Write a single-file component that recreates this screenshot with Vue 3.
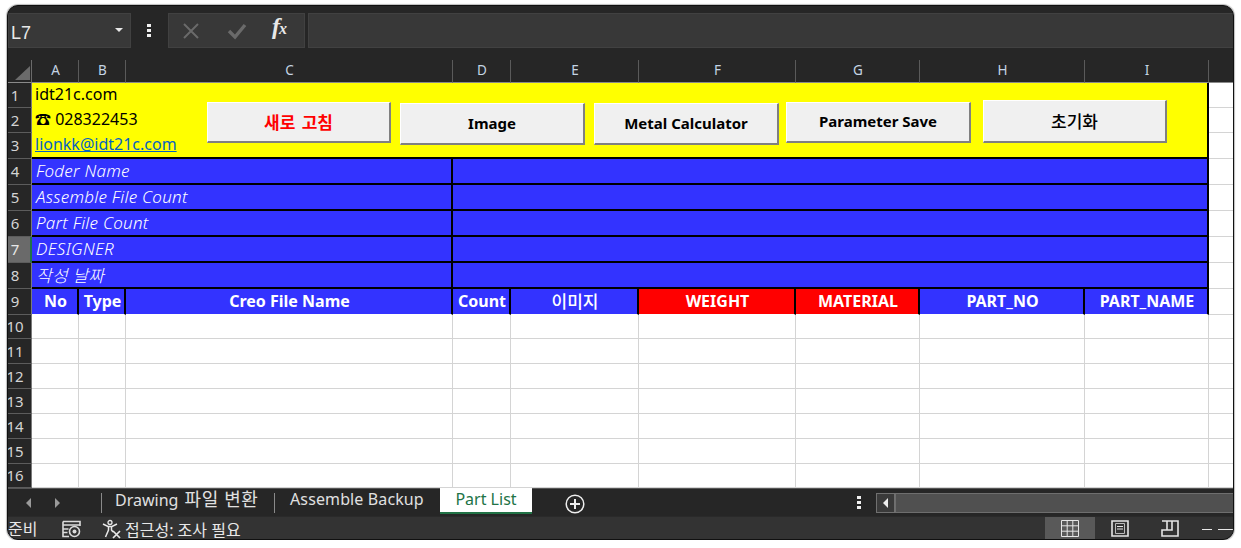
<script setup>
const columns = ['A', 'B', 'C', 'D', 'E', 'F', 'G', 'H', 'I']
const infoRows = [
  { n: 4, label: 'Foder Name' },
  { n: 5, label: 'Assemble File Count' },
  { n: 6, label: 'Part File Count' },
  { n: 7, label: 'DESIGNER', active: true },
  { n: 8, label: '작성 날짜' },
]
const headers = [
  { t: 'No' }, { t: 'Type' }, { t: 'Creo File Name' }, { t: 'Count' }, { t: '이미지', kr: true },
  { t: 'WEIGHT', red: true }, { t: 'MATERIAL', red: true }, { t: 'PART_NO' }, { t: 'PART_NAME' },
]
const emptyRows = [10, 11, 12, 13, 14, 15, 16]
const buttons = [
  { t: '새로 고침', cls: 'b1 red kr' },
  { t: 'Image', cls: 'b2' },
  { t: 'Metal Calculator', cls: 'b3' },
  { t: 'Parameter Save', cls: 'b4' },
  { t: '초기화', cls: 'b5 plain kr' },
]
</script>

<template>
  <div class="window">
    <div class="formula">
      <div class="namebox"><span>L7</span><i class="caret"></i></div>
      <div class="vdots"><b></b><b></b><b></b></div>
      <div class="fbtns">
        <svg width="18" height="18" viewBox="0 0 18 18"><path d="M2 2L16 16M16 2L2 16" stroke="#6a6a6a" stroke-width="2" fill="none"/></svg>
        <svg width="20" height="18" viewBox="0 0 20 18"><path d="M2 9L8 15L18 3" stroke="#6a6a6a" stroke-width="3.4" fill="none"/></svg>
        <span class="fx">f<span class="fxx">x</span></span>
      </div>
      <div class="finput"></div>
    </div>

    <div class="sheet">
      <div class="corner"><svg width="16" height="16" viewBox="0 0 16 16"><path d="M16 1V15H1Z" fill="#6b6b6b"/></svg></div>
      <div v-for="c in columns" :key="c" class="colh">{{ c }}</div>
      <div class="colh tailh"></div>

      <div class="rowh">1</div>
      <div class="yellow">
        <div class="contact">
          <div>idt21c.com</div>
          <div>☎ 028322453</div>
          <div class="mail">lionkk@idt21c.com</div>
        </div>
        <button v-for="b in buttons" :key="b.t" class="xbtn" :class="b.cls">{{ b.t }}</button>
      </div>
      <div class="tail"></div>
      <div class="rowh">2</div>
      <div class="tail"></div>
      <div class="rowh">3</div>
      <div class="tail"></div>

      <template v-for="r in infoRows" :key="r.n">
        <div class="rowh" :class="{ on: r.active }">{{ r.n }}</div>
        <div class="label"><span>{{ r.label }}</span></div>
        <div class="value"></div>
        <div class="tail"></div>
      </template>

      <div class="rowh">9</div>
      <div v-for="h in headers" :key="h.t" class="head" :class="{ redh: h.red, krh: h.kr }"><span>{{ h.t }}</span></div>
      <div class="tail"></div>

      <template v-for="r in emptyRows" :key="r">
        <div class="rowh">{{ r }}</div>
        <div v-for="c in columns" :key="c" class="cell"></div>
        <div class="tail"></div>
      </template>
    </div>

    <div class="tabs">
      <i class="tri left"></i>
      <i class="tri right"></i>
      <span class="sep s1"></span>
      <span class="tab t1">Drawing <span class="tabkr">파일 변환</span></span>
      <span class="sep s2"></span>
      <span class="tab t2">Assemble Backup</span>
      <span class="tab active">Part List</span>
      <svg class="plus" width="20" height="20" viewBox="0 0 20 20"><circle cx="10" cy="10" r="8.8" stroke="#eee" stroke-width="1.5" fill="none"/><path d="M10 5V15M5 10H15" stroke="#eee" stroke-width="2"/></svg>
      <div class="vdots tabdots"><b></b><b></b><b></b></div>
      <div class="scroll">
        <div class="sarrow"><i class="tri left white"></i></div>
        <div class="strack"></div>
      </div>
    </div>

    <div class="status">
      <span class="ready">준비</span>
      <svg class="macro" width="19" height="18" viewBox="0 0 19 18">
        <path d="M1 1.5H18V6M1 1.5V16.5H7M1 5H18M1 9H6.5M1 12.5H5.5" stroke="#dcdcdc" stroke-width="1.6" fill="none"/>
        <circle cx="12.5" cy="11.5" r="5" stroke="#dcdcdc" stroke-width="1.6" fill="none"/>
        <circle cx="12.5" cy="11.5" r="2" fill="#dcdcdc"/>
      </svg>
      <svg class="access" width="20" height="20" viewBox="0 0 20 20">
        <circle cx="8" cy="3.5" r="2" stroke="#e8e8e8" stroke-width="1.3" fill="none"/>
        <path d="M1 5L6 7.5H10L15 5M6.5 8V11L3.5 18M9.5 8V11L11 13" stroke="#e8e8e8" stroke-width="1.5" fill="none"/>
        <path d="M11 12L18 19M18 12L11 19" stroke="#e8e8e8" stroke-width="1.7" fill="none"/>
      </svg>
      <span class="acc">접근성: 조사 필요</span>
      <div class="views">
        <div class="view on">
          <svg width="18" height="17" viewBox="0 0 18 17"><path d="M.5.5H17.5V16.5H.5ZM6.2.5V16.5M11.8.5V16.5M.5 5.8H17.5M.5 11.2H17.5" stroke="#e6e6e6" fill="none"/></svg>
        </div>
        <div class="view">
          <svg width="18" height="17" viewBox="0 0 18 17"><path d="M1 1H17V16H1Z" stroke="#e6e6e6" stroke-width="1.6" fill="none"/><path d="M4.5 3.5H13.5V13.5H4.5Z" stroke="#bbb" fill="none"/><path d="M6 6.5H12M6 9H12" stroke="#e6e6e6" stroke-width="1.2"/></svg>
        </div>
        <div class="view">
          <svg width="18" height="17" viewBox="0 0 18 17"><path d="M1 1H17V16H1V10H11V1M6 1V10" stroke="#e6e6e6" stroke-width="1.6" fill="none"/></svg>
        </div>
      </div>
      <div class="zoomline"><i class="z1"></i><i class="z2"></i></div>
    </div>
  </div>
</template>

<style scoped>
.window {
  box-sizing: border-box;
  width: 1227px;
  height: 535px;
  margin: 5px 0 0 7px;
  border: 1px solid #101010;
  border-radius: 11px;
  box-shadow: 0 0 1px 1px #bdbdbd;
  overflow: hidden;
  background: #262626;
  font-family: "Noto Sans", "Noto Sans CJK KR", sans-serif;
  display: flex;
  flex-direction: column;
}
.formula {
  height: 54px;
  padding-top: 7px;
  box-sizing: border-box;
  display: flex;
  align-items: flex-start;
  flex: none;
}
.namebox {
  box-sizing: border-box;
  width: 123px;
  height: 35px;
  background: #383838;
  border: 1px solid #414141;
  color: #e8e8e8;
  font-family: "Liberation Sans", sans-serif;
  font-size: 18px;
  display: flex;
  align-items: center;
  justify-content: space-between;
  padding: 6px 7px 0 2px;
}
.caret {
  width: 0;
  height: 0;
  border-left: 4px solid transparent;
  border-right: 4px solid transparent;
  border-top: 4px solid #e8e8e8;
  margin-top: -8px;
}
.vdots {
  width: 4px;
  display: flex;
  flex-direction: column;
  gap: 2px;
}
.vdots b {
  width: 4px;
  height: 3px;
  background: #f0f0f0;
  display: block;
}
.formula > .vdots {
  margin: 11px 17px 0 16px;
}
.fbtns {
  box-sizing: border-box;
  width: 137px;
  height: 35px;
  background: #383838;
  border: 1px solid #414141;
  display: flex;
  align-items: center;
  padding-left: 13px;
}
.fbtns svg:nth-child(2) {
  margin-left: 27px;
}
.fx {
  margin-left: 25px;
  font-family: "Liberation Serif", serif;
  font-style: italic;
  font-weight: 700;
  font-size: 24px;
  line-height: 24px;
  color: #e8e8e8;
  margin-top: -6px;
}
.fxx {
  font-size: 16px;
  margin-left: -1px;
}
.finput {
  flex: 1;
  height: 35px;
  margin-left: 3px;
  box-sizing: border-box;
  background: #383838;
  border: 1px solid #414141;
  border-right: none;
}
.sheet {
  display: grid;
  grid-template-columns: 24px 47px 47px 327px 58px 128px 157px 124px 165px 124px 1fr;
  grid-template-rows: 23px 25px 25px 26px 26px 26px 26px 26px 26px 26px 24px 25px 25px 25px 25px 25px 24px;
  flex: none;
  background: #fff;
}
.corner {
  background: #262626;
  border-right: 1px solid #6a6a6a;
  border-bottom: 1px solid #8a8a8a;
  box-sizing: border-box;
  padding: 4px 0 0 6px;
}
.colh {
  background: #262626;
  color: #c4d4e4;
  font-size: 13.5px;
  box-sizing: border-box;
  border-right: 1px solid #5a5a5a;
  border-bottom: 1px solid #8a8a8a;
  display: flex;
  align-items: center;
  justify-content: center;
  padding: 0 0 2px 1px;
}
.tailh {
  border-right: none;
}
.rowh {
  background: #262626;
  color: #d4d4d4;
  font-size: 15px;
  box-sizing: border-box;
  border-right: 1px solid #7a7a7a;
  border-bottom: 1px solid #5c5c5c;
  display: flex;
  align-items: center;
  justify-content: center;
  padding: 0 9px 1px 0;
  white-space: nowrap;
}
.rowh.on {
  background: #6a6a6a;
  color: #e8e8e8;
  border-right: 2px solid #217346;
  padding-right: 8px;
}
.yellow {
  grid-column: span 9;
  grid-row: span 3;
  position: relative;
  background: #ff0;
  border-right: 2px solid #000;
  border-bottom: 2px solid #000;
  box-sizing: border-box;
  color: #000;
}
.contact {
  padding-left: 3px;
  margin-top: -1px;
  font-size: 16px;
  line-height: 25px;
}
.mail {
  color: #0563c1;
  text-decoration: underline;
  width: max-content;
}
.xbtn {
  position: absolute;
  box-sizing: border-box;
  width: 185px;
  height: 41px;
  padding: 0 0 2px;
  background: #f0f0f0;
  border-style: solid;
  border-width: 1px 2px 2px 1px;
  border-color: #fff #808080 #808080 #fff;
  font-family: "Noto Sans", "Noto Sans CJK KR", sans-serif;
  font-size: 15px;
  font-weight: 700;
  color: #000;
}
.kr { font-size: 17px; }
.b1 { left: 175px; top: 19px; width: 184px; }
.b1.kr { word-spacing: 2px; }
.b2 { left: 368px; top: 20px; height: 42px; }
.b3 { left: 562px; top: 20px; height: 42px; }
.b4 { left: 754px; top: 19px; }
.b5 { left: 951px; top: 17px; height: 43px; width: 184px; }
.red { color: #f00; }
.plain { font-weight: 500; }
.tail {
  background: #fff;
  border-bottom: 1px solid #d4d4d4;
}
.label {
  grid-column: span 3;
  background: #3333ff;
  color: #fff;
  font-style: italic;
  font-size: 17px;
  letter-spacing: .25px;
  font-weight: 300;
  box-sizing: border-box;
  border-right: 2px solid #000;
  border-bottom: 2px solid #000;
  padding: 0 0 2px 4px;
  display: flex;
  align-items: center;
}
.value {
  grid-column: span 6;
  background: #3333ff;
  box-sizing: border-box;
  border-right: 2px solid #000;
  border-bottom: 2px solid #000;
}
.head {
  background: #3333ff;
  color: #fff;
  font-weight: 700;
  font-size: 16px;
  box-sizing: border-box;
  border-right: 2px solid #000;
  border-bottom: 1px solid #fff;
  display: flex;
  align-items: center;
  justify-content: center;
  white-space: nowrap;
  padding: 0 0 2px 2px;
}
.krh {
  font-size: 17px;
  font-weight: 500;
}
.redh {
  background: #f00;
}
.cell {
  box-sizing: border-box;
  border-right: 1px solid #d4d4d4;
  border-bottom: 1px solid #d4d4d4;
}
.tabs {
  position: relative;
  height: 28px;
  flex: none;
  background: #262626;
  border-top: 1px solid #555;
  box-sizing: border-box;
  color: #e0e0e0;
  font-size: 16px;
}
.tri {
  position: absolute;
  top: 9px;
  width: 0;
  height: 0;
  border-top: 5px solid transparent;
  border-bottom: 5px solid transparent;
}
.tri.left {
  left: 18px;
  border-right: 5px solid #9a9a9a;
}
.tri.right {
  left: 47px;
  border-left: 5px solid #9a9a9a;
}
.tri.white {
  left: 6px;
  top: 4px;
  border-right-color: #eee;
}
.sep {
  position: absolute;
  top: 4px;
  width: 1px;
  height: 20px;
  background: #8a8a8a;
}
.s1 { left: 93px; }
.s2 { left: 266px; }
.tab {
  position: absolute;
  top: -1px;
  white-space: nowrap;
  line-height: 22px;
}
.tabkr {
  font-size: 18px;
  letter-spacing: .6px;
  margin-left: 2px;
}
.t1 { left: 107px; }
.t2 { left: 282px; letter-spacing: .12px; }
.active {
  left: 432px;
  top: -1px;
  width: 92px;
  height: 26px;
  box-sizing: border-box;
  background: #fff;
  color: #217346;
  text-align: center;
  border-bottom: 2px solid #217346;
  line-height: 23px;
}
.plus {
  position: absolute;
  left: 557px;
  top: 5px;
}
.tabdots {
  position: absolute;
  left: 849px;
  top: 7px;
}
.scroll {
  position: absolute;
  left: 868px;
  right: 0;
  top: 4px;
  height: 20px;
  display: flex;
}
.sarrow {
  position: relative;
  width: 19px;
  box-sizing: border-box;
  background: #3a3a3a;
  border: 1px solid #707070;
}
.strack {
  flex: 1;
  background: #505050;
  border: 1px solid #6e6e6e;
  border-right: none;
  box-sizing: border-box;
}
.status {
  position: relative;
  flex: 1;
  background: #333;
  border-top: 1px solid #2a2a2a;
  box-sizing: border-box;
  color: #e8e8e8;
  font-size: 16px;
}
.ready {
  position: absolute;
  left: 0;
  top: 2px;
  line-height: 20px;
}
.macro {
  position: absolute;
  left: 54px;
  top: 3px;
}
.access {
  position: absolute;
  left: 94px;
  top: 2px;
}
.acc {
  position: absolute;
  left: 117px;
  top: 3px;
  line-height: 20px;
}
.views {
  position: absolute;
  left: 1037px;
  top: 0;
  bottom: 0;
  display: flex;
}
.view {
  width: 50px;
  display: flex;
  align-items: center;
  justify-content: center;
  padding-top: 1px;
  box-sizing: border-box;
}
.view.on {
  background: #595959;
}
.zoomline i {
  position: absolute;
  top: 12px;
  height: 1px;
  background: #e8e8e8;
}
.z1 { left: 1194px; width: 10px; }
.z2 { left: 1210px; width: 16px; }
</style>

<style>
html, body {
  margin: 0;
  background: #fff;
  overflow: hidden;
}
</style>
